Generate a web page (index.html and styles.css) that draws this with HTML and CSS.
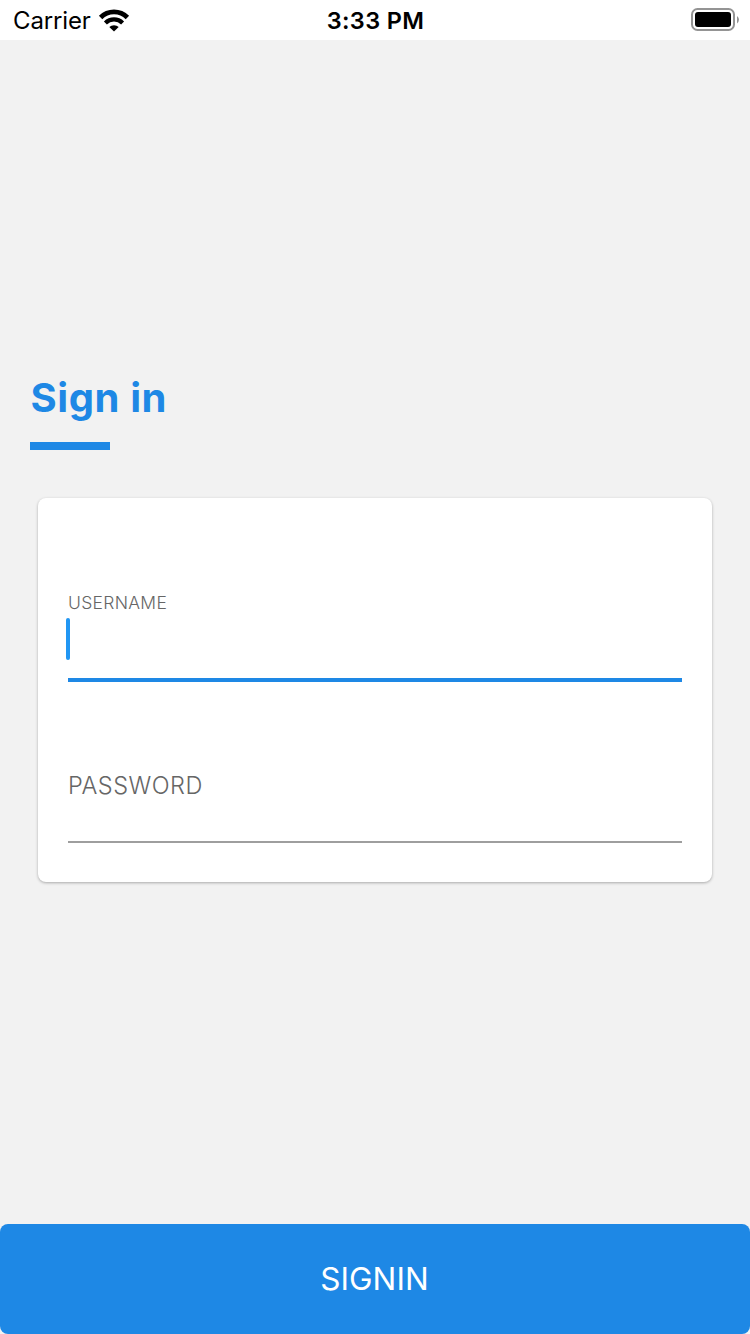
FILE: index.html
```html
<!DOCTYPE html>
<html lang="en">
<head>
<meta charset="utf-8">
<title>Sign in</title>
<link rel="stylesheet" href="styles.css">
</head>
<body>
<div class="screen">
  <header class="status">
    <div class="status-left">
      <span class="carrier">Carrier</span>
      <svg class="wifi" width="32" height="24" viewBox="0 0 32 24" fill="none" stroke="#000" stroke-width="4.8">
        <path d="M2.600 8.500A19 19 0 0 1 29.400 8.500"/>
        <path d="M7.400 14A12.200 12.200 0 0 1 24.600 14" stroke-width="4.200"/>
        <path d="M16 22.400L11.300 18.100A6.700 6.700 0 0 1 20.700 18.100Z" fill="#000" stroke="none"/>
      </svg>
    </div>
    <span class="clock">3:33 PM</span>
    <svg class="battery" width="48" height="24" viewBox="0 0 48 24">
      <rect x="1" y="1" width="42" height="21" rx="5.5" fill="none" stroke="#949494" stroke-width="2"/>
      <rect x="4" y="4" width="36" height="15" rx="3" fill="#000"/>
      <path d="M46 8Q48 9.500 48 11.500T46 15.500Z" fill="#949494"/>
    </svg>
  </header>
  <main class="content">
    <h1 class="title">Sign in</h1>
    <div class="accent"></div>
    <form class="card">
      <div class="field field-active">
        <label class="label-small">USERNAME</label>
        <div class="caret"></div>
      </div>
      <div class="field field-idle">
        <label class="label-large">PASSWORD</label>
      </div>
    </form>
  </main>
  <button class="submit" type="button">SIGNIN</button>
</div>
</body>
</html>
```
FILE: styles.css
```css
* { box-sizing: border-box; }
body { margin: 0; font-family: Inter, Roboto, sans-serif; }
.screen {
  display: flex;
  flex-direction: column;
  width: 750px;
  height: 1334px;
  background: #f2f2f2;
  overflow: hidden;
}
.status {
  display: grid;
  grid-template-columns: 1fr auto 1fr;
  height: 40px;
  padding: 0 11px 0 13px;
  background: #fff;
  color: #000;
  font-size: 24px;
  line-height: 42px;
}
.status-left { display: flex; gap: 8px; }
.carrier { letter-spacing: -0.15px; }
.wifi { margin-top: 9px; margin-left: -1px; }
.clock { font-size: 23.5px; font-weight: 600; letter-spacing: 0.35px; margin-left: -1px; }
.battery { justify-self: end; margin-top: 8px; }
.content { flex: 1; padding-top: 333px; }
.title {
  margin: 0 0 19px 30.5px;
  height: 50px;
  line-height: 50px;
  font-size: 40px;
  font-weight: 700;
  letter-spacing: 0.6px;
  color: #1e88e5;
}
.accent { width: 80px; height: 8px; margin-left: 30px; background: #1e88e5; }
.card {
  width: 674px;
  height: 384px;
  margin: 48px 0 0 38px;
  padding: 92px 30px 0;
  background: #fff;
  border-radius: 8px;
  box-shadow: 0 1px 3px rgba(0, 0, 0, 0.3);
}
.field { display: flex; flex-direction: column; color: #666; font-weight: 300; }
.field-active { height: 92px; border-bottom: 4px solid #1e88e5; }
.field-idle { height: 161px; border-bottom: 2px solid #9e9e9e; }
.label-small { height: 28px; font-size: 17.5px; line-height: 26px; letter-spacing: 0.3px; }
.label-large { padding-top: 84px; font-size: 23.5px; line-height: 39px; letter-spacing: 0.5px; }
.caret { width: 4px; height: 42px; margin-left: -2px; border-radius: 2px; background: #2196f3; }
.submit {
  height: 110px;
  padding: 0 1px 0 0;
  border: 0;
  border-radius: 8px;
  background: #1e88e5;
  color: #fff;
  font: 400 31.5px/110px Inter, Roboto, sans-serif;
  letter-spacing: 0.1px;
}
```
